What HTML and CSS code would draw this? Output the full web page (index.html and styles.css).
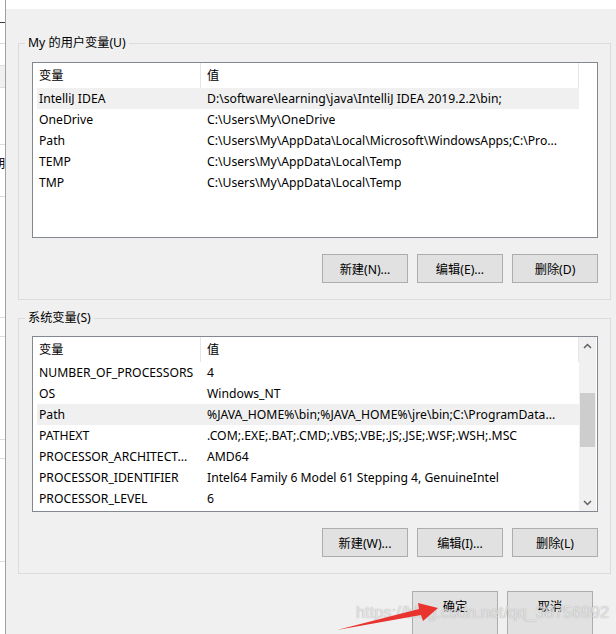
FILE: index.html
```html
<html>
<head>
    <meta charset="utf-8">
    <link rel="stylesheet" href="styles.css">
</head>
<body>
<div class="screen">
    <div class="behind">
        <div class="strip dark h22"></div>
        <div class="strip h20"></div>
        <div class="strip h21"></div>
        <div class="strip grey h21"></div>
        <div class="strip h56"></div>
        <div class="strip glyph">胡</div>
        <div class="strip h17"></div>
        <div class="strip h120"></div>
        <div class="strip h18"></div>
        <div class="strip h102"></div>
        <div class="strip h18"></div>
        <div class="strip h102"></div>
        <div class="strip h81"></div>
        <div class="strip grey h9"></div>
        <div class="strip mid h26"></div>
        <div class="strip h10"></div>
        <div class="taskbar"></div>
    </div>

    <div class="dialog">
        <div class="title-edge"></div>
        <div class="content">
            <fieldset class="group">
                <legend>My 的用户变量(U)</legend>
                <div class="list">
                    <div class="list-body">
                        <div class="list-head">
                            <div class="hcell name">变量</div>
                            <div class="hcell value">值</div>
                        </div>
                        <div class="row sel"><div class="cell name">IntelliJ IDEA</div><div class="cell value">D:\software\learning\java\IntelliJ IDEA 2019.2.2\bin;</div></div>
                        <div class="row"><div class="cell name">OneDrive</div><div class="cell value">C:\Users\My\OneDrive</div></div>
                        <div class="row"><div class="cell name">Path</div><div class="cell value">C:\Users\My\AppData\Local\Microsoft\WindowsApps;C:\Pro...</div></div>
                        <div class="row"><div class="cell name">TEMP</div><div class="cell value">C:\Users\My\AppData\Local\Temp</div></div>
                        <div class="row"><div class="cell name">TMP</div><div class="cell value">C:\Users\My\AppData\Local\Temp</div></div>
                    </div>
                </div>
                <div class="actions">
                    <button class="btn">新建(N)...</button>
                    <button class="btn">编辑(E)...</button>
                    <button class="btn">删除(D)</button>
                </div>
            </fieldset>

            <fieldset class="group system">
                <legend>系统变量(S)</legend>
                <div class="list">
                    <div class="list-body">
                        <div class="list-head">
                            <div class="hcell name">变量</div>
                            <div class="hcell value">值</div>
                        </div>
                        <div class="row"><div class="cell name">NUMBER_OF_PROCESSORS</div><div class="cell value">4</div></div>
                        <div class="row"><div class="cell name">OS</div><div class="cell value">Windows_NT</div></div>
                        <div class="row sel"><div class="cell name">Path</div><div class="cell value">%JAVA_HOME%\bin;%JAVA_HOME%\jre\bin;C:\ProgramData...</div></div>
                        <div class="row"><div class="cell name">PATHEXT</div><div class="cell value">.COM;.EXE;.BAT;.CMD;.VBS;.VBE;.JS;.JSE;.WSF;.WSH;.MSC</div></div>
                        <div class="row"><div class="cell name">PROCESSOR_ARCHITECT...</div><div class="cell value">AMD64</div></div>
                        <div class="row"><div class="cell name">PROCESSOR_IDENTIFIER</div><div class="cell value">Intel64 Family 6 Model 61 Stepping 4, GenuineIntel</div></div>
                        <div class="row"><div class="cell name">PROCESSOR_LEVEL</div><div class="cell value">6</div></div>
                    </div>
                    <div class="scrollbar">
                        <div class="sb-arrow">
                            <svg width="9" height="6" viewBox="0 0 9 6"><path d="M1 5 L4.5 1.5 L8 5" fill="none" stroke="#606060" stroke-width="1.5"/></svg>
                        </div>
                        <div class="sb-track"><div class="sb-thumb"></div></div>
                        <div class="sb-arrow">
                            <svg width="9" height="6" viewBox="0 0 9 6"><path d="M1 1 L4.5 4.5 L8 1" fill="none" stroke="#606060" stroke-width="1.5"/></svg>
                        </div>
                    </div>
                </div>
                <div class="actions">
                    <button class="btn">新建(W)...</button>
                    <button class="btn">编辑(I)...</button>
                    <button class="btn">删除(L)</button>
                </div>
            </fieldset>

            <div class="footer">
                <button class="btn tall">确定</button>
                <button class="btn tall">取消</button>
            </div>
        </div>
    </div>

    <div class="watermark">https://blog.csdn.net/qq_38756992</div>
    <svg class="arrow" width="115" height="40" viewBox="0 0 115 40">
        <polygon points="7,35 89,14 88,8 108,13 93,26 91,20" fill="#e8332e"/>
    </svg>
</div>
</body>
</html>
```

FILE: styles.css
```css
body {
    margin: 0;
    width: 616px;
    height: 634px;
    overflow: hidden;
    font-family: "Noto Sans", "Noto Sans CJK SC", sans-serif;
    font-size: 12.2px;
    color: #000;
}
.screen {
    position: relative;
    display: flex;
    height: 634px;
    overflow: hidden;
}

/* window behind the dialog */
.behind {
    width: 5px;
    flex-shrink: 0;
    background: #fff;
    border-right: 1px solid #a0a0a0;
    overflow: hidden;
    display: flex;
    flex-direction: column;
}
.strip {
    flex-shrink: 0;
    border-bottom: 1px solid #dcdcdc;
}
.strip.dark { border-bottom-color: #404040; }
.strip.grey { background: #f0f0f0; }
.strip.mid { background: #e1e1e1; border-bottom-color: #c8c8c8; }
.h9 { height: 9px; }
.h10 { height: 10px; }
.h17 { height: 17px; }
.h18 { height: 18px; }
.h20 { height: 20px; }
.h21 { height: 21px; }
.h22 { height: 22px; }
.h26 { height: 26px; }
.h56 { height: 56px; }
.h81 { height: 81px; }
.h102 { height: 102px; }
.h120 { height: 120px; }
.strip.glyph {
    height: 34px;
    line-height: 38px;
    text-indent: -7px;
    white-space: nowrap;
    border-bottom: none;
}
.taskbar {
    flex: 1;
    background: #17173a;
}

/* dialog */
.dialog {
    flex: 1;
    background: #f0f0f0;
    overflow: hidden;
}
.title-edge {
    height: 9px;
    background: #fff;
}
.content {
    padding: 0 5px 0 12px;
    display: flow-root;
}
.group {
    margin: 26px 0 0 0;
    padding: 0 12px 16px 13px;
    border: 1px solid #dcdcdc;
}
.group.system {
    margin-top: 10px;
}
.group legend {
    margin-left: -7px;
    padding: 0 3px;
    line-height: 16px;
}

.list {
    margin-top: 11px;
    height: 176px;
    box-sizing: border-box;
    border: 1px solid #828790;
    background: #fff;
    display: flex;
    overflow: hidden;
}
.system .list {
    margin-top: 10px;
}
.list-body {
    width: 546px;
}
.list-head {
    display: flex;
    height: 25px;
    line-height: 25px;
    width: 545px;
    border-right: 1px solid #e5e5e5;
}
.hcell.name {
    width: 161px;
    padding-left: 6px;
    border-right: 1px solid #e5e5e5;
}
.hcell.value {
    padding-left: 6px;
}
.row {
    display: flex;
    margin-left: 4px;
    width: 542px;
    height: 21px;
    line-height: 21px;
    white-space: nowrap;
}
.row.sel {
    background: #f0f0f0;
}
.cell.name {
    width: 161px;
    padding-left: 2px;
    overflow: hidden;
}
.cell.value {
    padding-left: 7px;
    overflow: hidden;
}

.scrollbar {
    width: 17px;
    background: #f0f0f0;
    display: flex;
    flex-direction: column;
}
.sb-arrow {
    height: 17px;
    display: flex;
    align-items: center;
    justify-content: center;
}
.sb-track {
    flex: 1;
    padding-top: 39px;
}
.sb-thumb {
    margin-left: 1px;
    width: 15px;
    height: 54px;
    background: #cdcdcd;
}

.actions {
    display: flex;
    justify-content: flex-end;
    gap: 9px;
    margin-top: 16px;
}
.btn {
    width: 86px;
    height: 29px;
    padding: 0;
    background: #e1e1e1;
    border: 1px solid #adadad;
    font-family: "Noto Sans", "Noto Sans CJK SC", sans-serif;
    font-size: 12.2px;
    color: #000;
}
.footer {
    display: flex;
    justify-content: flex-end;
    gap: 9px;
    margin-top: 17px;
    padding-right: 18px;
}
.btn.tall {
    height: 46px;
    padding-bottom: 17px;
}

/* overlays */
.watermark {
    position: absolute;
    left: 356px;
    top: 603px;
    font-family: "Liberation Sans", Arial, sans-serif;
    font-size: 16.5px;
    color: rgba(255, 255, 255, 0.7);
    text-shadow: 0 0 1px rgba(110, 110, 110, 0.7);
    white-space: nowrap;
}
.arrow {
    position: absolute;
    left: 330px;
    top: 595px;
}
```
